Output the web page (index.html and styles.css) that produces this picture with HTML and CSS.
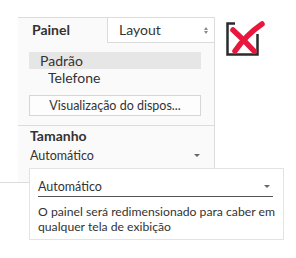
FILE: index.html
```html
<!DOCTYPE html>
<html lang="pt-BR"><head>
<meta charset="utf-8">
<meta name="viewport" content="width=device-width, initial-scale=1.0">
<link rel="stylesheet" href="styles.css">
<title>Painel</title>
</head><body>
<div class="page">
	<div class="panel">
		<div class="tabs">
			<div class="tab tab-active">Painel</div>
			<div class="tab tab-other">Layout <span class="updown"></span></div>
		</div>
		<div class="devices">
			<div class="list">
				<div class="item item-selected">Padrão</div>
				<div class="item item-sub">Telefone</div>
			</div>
			<div class="preview-btn">Visualização do dispos...</div>
		</div>
		<div class="size">
			<div class="size-title">Tamanho</div>
			<div class="size-value">Automático <span class="caret"></span></div>
		</div>
		<div class="rule"></div>
	</div>
	<svg class="clear-icon" width="44" height="44" viewBox="0 0 44 44">
		<path d="M13 5.5 H5.5 V36.5 H35.5 V16" fill="none" stroke="#2b2b2b" stroke-width="2.5"/>
		<path d="M11 12 Q21 21 32 33" fill="none" stroke="#e8173d" stroke-width="5.5" stroke-linecap="round"/>
		<path d="M40 6 Q24 17 13 33" fill="none" stroke="#e8173d" stroke-width="5.5" stroke-linecap="round"/>
	</svg>
</div>

<div class="popup">
	<div class="popup-select">Automático <span class="caret"></span></div>
	<p class="popup-text">O painel será redimensionado para caber em qualquer tela de exibição</p>
</div>
</body></html>
```
FILE: styles.css
```css
body {
	margin : 0 ;
	font-family : Lato, "Open Sans", sans-serif ;
	color : #333 ;
	background : #fff ;
	}
.page {
	display : flex ;
	align-items : flex-start ;
	padding : 17px 0 0 18px ;
	}
.panel {
	width : 197px ;
	box-sizing : border-box ;
	border-top : 1px solid #dcdcdc ;
	border-right : 1px solid #dcdcdc ;
	background : #fafafa ;
	}
.tabs {
	display : flex ;
	height : 25px ;
	}
.tab {
	font-size : 14px ;
	line-height : 24px ;
	}
.tab-active {
	width : 89px ;
	padding-left : 14px ;
	box-sizing : border-box ;
	font-weight : bold ;
	}
.tab-other {
	flex : 1 ;
	display : flex ;
	align-items : center ;
	justify-content : space-between ;
	padding : 0 6px 0 11px ;
	border-left : 1px solid #dcdcdc ;
	border-bottom : 1px solid #dcdcdc ;
	background : #fff ;
	}
.updown {
	display : flex ;
	flex-direction : column ;
	gap : 1px ;
	}
.updown::before ,
.updown::after {
	content : "" ;
	border-left : 2.5px solid transparent ;
	border-right : 2.5px solid transparent ;
	}
.updown::before { border-bottom : 3px solid #8a8a8a }
.updown::after { border-top : 3px solid #8a8a8a }
.devices {
	padding : 9px 13px 9px 11px ;
	border-bottom : 1px solid #dcdcdc ;
	}
.item {
	font-size : 14px ;
	line-height : 17px ;
	height : 17px ;
	}
.item-selected {
	padding-left : 11px ;
	background : #e6e6e6 ;
	}
.item-sub {
	padding-left : 19px ;
	}
.preview-btn {
	margin-top : 9px ;
	height : 21px ;
	box-sizing : border-box ;
	border : 1px solid #d6d6d6 ;
	background : #fdfdfd ;
	font-size : 12.5px ;
	line-height : 19px ;
	text-align : center ;
	}
.size {
	padding : 1px 14px 18px 12px ;
	}
.size-title {
	font-size : 14px ;
	font-weight : bold ;
	line-height : 17px ;
	}
.size-value {
	margin-top : 3px ;
	display : flex ;
	align-items : center ;
	justify-content : space-between ;
	font-size : 12.5px ;
	line-height : 17px ;
	}
.caret {
	border-left : 3px solid transparent ;
	border-right : 3px solid transparent ;
	border-top : 3px solid #666 ;
	}
.rule {
	margin-left : -18px ;
	border-top : 1px solid #dcdcdc ;
	}
.clear-icon {
	margin : 1px 0 0 7px ;
	}
.popup {
	position : absolute ;
	left : 29px ;
	top : 168px ;
	width : 255px ;
	height : 72px ;
	box-sizing : border-box ;
	padding : 9px 10px 0 8px ;
	border : 1px solid #e3e3e3 ;
	background : #fff ;
	}
.popup-select {
	display : flex ;
	align-items : center ;
	justify-content : space-between ;
	font-size : 12.5px ;
	line-height : 17px ;
	padding : 0 3px 1px 0 ;
	border-bottom : 1px solid #555 ;
	}
.popup-text {
	margin : 7px -9px 0 0 ;
	font-size : 12.2px ;
	line-height : 15px ;
	}
```
